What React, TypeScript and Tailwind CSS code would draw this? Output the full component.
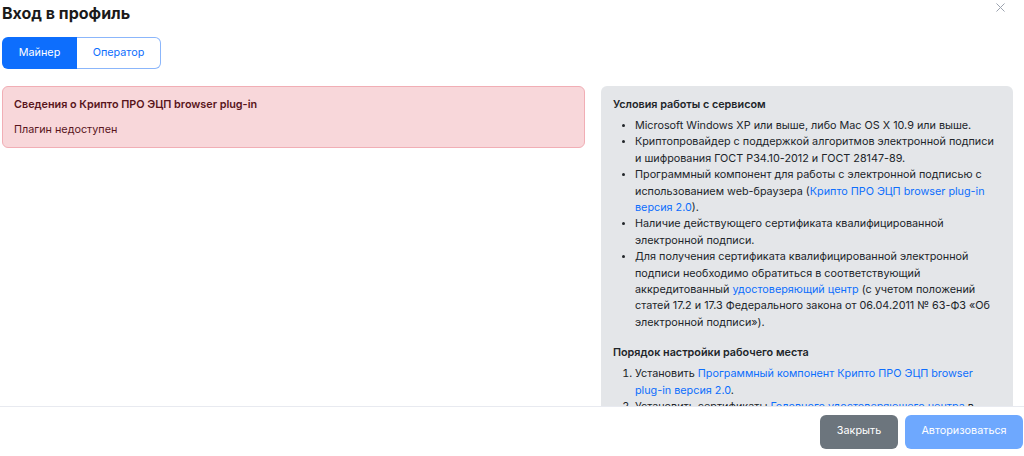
import { X } from "lucide-react";

const link = "text-[#0d6efd]";

function Requirements() {
  return (
    <div className="w-[412px] shrink-0 self-start rounded-md bg-[#e4e6e9] px-3 pt-[10px] pb-6 text-[10.8px] leading-[16.4px] text-[#212529]">
      <h3 className="mb-[4px] leading-[18px] font-semibold">Условия работы с сервисом</h3>
      <ul className="list-disc pl-[22px] marker:text-[9px]">
        <li>Microsoft Windows XP или выше, либо Mac OS X 10.9 или выше.</li>
        <li>
          Криптопровайдер с поддержкой алгоритмов электронной подписи и шифрования ГОСТ Р34.10-2012 и ГОСТ
          28147-89.
        </li>
        <li>
          Программный компонент для работы с электронной подписью с использованием web-браузера (
          <a className={link}>Крипто ПРО ЭЦП browser plug-in версия 2.0</a>).
        </li>
        <li>Наличие действующего сертификата квалифицированной электронной подписи.</li>
        <li>
          Для получения сертификата квалифицированной электронной подписи необходимо обратиться в
          соответствующий аккредитованный <a className={link}>удостоверяющий центр</a> (с учетом положений
          статей 17.2 и 17.3 Федерального закона от 06.04.2011 № 63-ФЗ «Об электронной подписи»).
        </li>
      </ul>
      <h3 className="mt-[13px] mb-[4px] leading-[18px] font-semibold">Порядок настройки рабочего места</h3>
      <ol className="list-decimal pl-[22px]">
        <li>
          Установить <a className={link}>Программный компонент Крипто ПРО ЭЦП browser plug-in версия 2.0</a>.
        </li>
        <li>
          Установить сертификаты <a className={link}>Головного удостоверяющего центра</a> в хранилище
          доверенных корневых сертификатов.
        </li>
        <li>Установить личный сертификат квалифицированной электронной подписи.</li>
      </ol>
    </div>
  );
}

export default function App() {
  return (
    <div className="flex h-[456px] w-[1024px] flex-col overflow-hidden bg-white font-['Inter',sans-serif] text-[#212529]">
      <header className="relative px-[2px] pt-[1px]">
        <h2 className="text-[16px] leading-[24px] font-bold text-[#1a1a1a]">Вход в профиль</h2>
        <button className="absolute top-0 right-[16px] text-[#9ca3af]">
          <X size={15} strokeWidth={1.6} />
        </button>
      </header>

      <div className="flex min-h-0 flex-1 flex-col overflow-hidden pt-3 pr-[11px] pl-[2px]">
        <div className="flex w-[159px]">
          <button className="h-[32px] w-[75px] rounded-l-md bg-[#0d6efd] text-[10.8px] text-white">Майнер</button>
          <button className="h-[32px] flex-1 rounded-r-md border border-l-0 border-[#8bb6fb] text-[10.8px] text-[#0d6efd]">
            Оператор
          </button>
        </div>

        <div className="mt-[17px] flex gap-4">
          <div className="h-[62px] flex-1 self-start rounded-md border border-[#f1aeb5] bg-[#f8d7da] px-[11px] pt-[9px] text-[10.8px] text-[#58151c]">
            <p className="leading-[18px] font-semibold">Сведения о Крипто ПРО ЭЦП browser plug-in</p>
            <p className="mt-[7px] leading-[18px]">Плагин недоступен</p>
          </div>
          <Requirements />
        </div>
      </div>

      <footer className="flex h-[50px] shrink-0 items-center justify-end gap-[7px] border-t border-[#e8eaf0] pr-[1px]">
        <button className="h-[34px] w-[78px] rounded-md bg-[#6c757d] text-[10.8px] text-white">Закрыть</button>
        <button className="h-[34px] w-[118px] rounded-md bg-[#6ea8fe] text-[10.8px] text-white">Авторизоваться</button>
      </footer>
    </div>
  );
}
